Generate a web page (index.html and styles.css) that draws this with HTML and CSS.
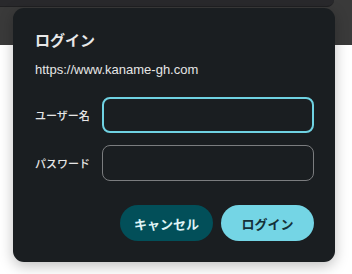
FILE: index.html
```html
<!DOCTYPE html>
<html lang="ja">
<head>
    <meta charset="UTF-8">
    <meta name="viewport" content="width=device-width, initial-scale=1.0">
    <title>ログイン</title>
    <link rel="stylesheet" href="styles.css">
</head>
<body>
    <div class="chrome">
        <div class="toolbar"></div>
    </div>

    <!-- Login dialog -->
    <div class="dialog">
        <h2 class="title">ログイン</h2>
        <p class="origin">https://www.kaname-gh.com</p>
        <form class="fields">
            <label for="user">ユーザー名</label>
            <input id="user" class="focused" type="text">
            <label for="pass">パスワード</label>
            <input id="pass" type="password">
        </form>
        <div class="actions">
            <button class="cancel">キャンセル</button>
            <button class="login">ログイン</button>
        </div>
    </div>
</body>
</html>
```

FILE: styles.css
```css
body {
    margin: 0;
    background-color: #ffffff;
    font-family: "Liberation Sans", "Noto Sans CJK JP", sans-serif;
    color: #e6e6e6;
}

.chrome {
    background-color: #3a3a3a;
    height: 45px;
}

.toolbar {
    width: 334px;
    height: 6px;
    background-color: #29292c;
    border-bottom: 1px solid #202022;
    border-bottom-right-radius: 8px;
}

.dialog {
    position: absolute;
    top: 8px;
    left: 13px;
    width: 322px;
    height: 254px;
    box-sizing: border-box;
    padding: 23px 21px 21px 22px;
    background-color: #1a1e21;
    border-radius: 11px;
    box-shadow: 0 4px 14px rgba(0, 0, 0, 0.25);
}

.title {
    margin: 0;
    font-size: 15px;
    line-height: 20px;
    font-weight: bold;
    color: #e8e8e8;
}

.origin {
    margin: 10px 0 0;
    font-size: 13px;
    line-height: 18px;
}

.fields {
    margin-top: 18px;
    display: grid;
    grid-template-columns: 67px 1fr;
    row-gap: 12px;
    align-items: center;
}

.fields label {
    font-family: "Noto Sans CJK JP", sans-serif;
    font-size: 11px;
    font-weight: 500;
    color: #e6e6e6;
}

.fields input {
    height: 36px;
    box-sizing: border-box;
    border: 1px solid #7b7d7f;
    border-radius: 8px;
    background-color: #1a1e21;
    color: #e6e6e6;
    outline: none;
}

.fields input.focused {
    border: 2px solid #6fd2e2;
}

.actions {
    margin-top: 24px;
    display: flex;
    justify-content: flex-end;
    gap: 8px;
}

.actions button {
    width: 93px;
    height: 36px;
    border: none;
    border-radius: 18px;
    font-family: "Noto Sans CJK JP", sans-serif;
    font-size: 13px;
    font-weight: bold;
    cursor: pointer;
}

.cancel {
    background-color: #024f59;
    color: #dff3f6;
}

.login {
    background-color: #74d5e5;
    color: #143038;
}
```
